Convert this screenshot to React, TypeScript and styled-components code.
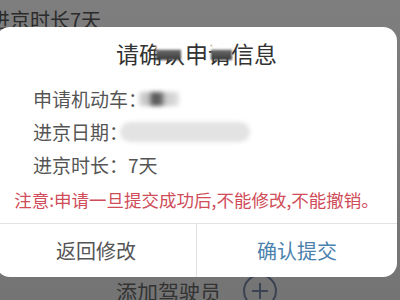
import React from "react";
import { createGlobalStyle, styled } from "styled-components";

const GlobalStyle = createGlobalStyle`
  html, body {
    margin: 0;
    padding: 0;
  }
  body {
    width: 400px;
    height: 300px;
    overflow: hidden;
    background: #7a7a7a;
    font-family: "Noto Sans CJK SC", "Noto Sans", sans-serif;
  }
`;

export default function App() {
  return (
    <>
      <GlobalStyle />
      <Screen>
        <BackdropPage>
          <BackLine>进京时长7天</BackLine>
          <BackFooter>
            <span>添加驾驶员</span>
            <PlusCircle viewBox="0 0 36 36">
              <circle cx="18" cy="18" r="16" fill="none" stroke="#3b4352" strokeWidth="2" />
              <path d="M10 18h16M18 10v16" stroke="#3b4352" strokeWidth="2" />
            </PlusCircle>
          </BackFooter>
        </BackdropPage>

        <Dialog>
          <TitleRow>
            <Title>
              请确认申请信息
              <Smudge $left={40} $width={25} />
              <Smudge $left={95} $width={21} />
            </Title>
          </TitleRow>

          <InfoList>
            <InfoRow>
              申请机动车：
              <Redacted $width={40} $height={14} $shift={-8} $plate />
            </InfoRow>
            <InfoRow>
              进京日期：
              <Redacted $width={130} $height={20} $shift={-8} />
            </InfoRow>
            <InfoRow>进京时长：7天</InfoRow>
          </InfoList>

          <Notice>注意:申请一旦提交成功后,不能修改,不能撤销。</Notice>

          <Actions>
            <ActionButton>返回修改</ActionButton>
            <ActionButton $primary>确认提交</ActionButton>
          </Actions>
        </Dialog>
      </Screen>
    </>
  );
}

const Screen = styled.div`
  position: relative;
  width: 400px;
  height: 300px;
  overflow: hidden;
  background: linear-gradient(to bottom, #7e7e7e, #747474);
`;

const BackdropPage = styled.div`
  height: 100%;
  display: flex;
  flex-direction: column;
  padding-top: 10px;
  box-sizing: border-box;
  color: #2b2b2b;
`;

const BackLine = styled.div`
  margin-left: -10px;
  font-size: 20px;
  line-height: 1;
`;

const BackFooter = styled.div`
  margin-top: auto;
  margin-bottom: -9px;
  padding-left: 116px;
  display: flex;
  align-items: center;
  gap: 21px;
  font-size: 21px;
  line-height: 1;
  color: #333;
`;

const PlusCircle = styled.svg`
  width: 36px;
  height: 36px;
`;

const Dialog = styled.div`
  position: absolute;
  top: 27px;
  left: -4px;
  width: 401px;
  height: 250px;
  background: #fff;
  border-radius: 14px;
  display: flex;
  flex-direction: column;
  overflow: hidden;
`;

const TitleRow = styled.div`
  padding-top: 11px;
  display: flex;
  justify-content: center;
`;

const Title = styled.div`
  position: relative;
  font-size: 23px;
  line-height: 30px;
  color: #333;
`;

const Smudge = styled.span<{ $left: number; $width: number }>`
  position: absolute;
  top: 4px;
  left: ${(p) => p.$left}px;
  width: ${(p) => p.$width}px;
  height: 18px;
  background: linear-gradient(
    to bottom,
    #fff 0,
    #fff 40%,
    #6a6a6a 45%,
    #3a3a3a 100%
  );
  filter: blur(0.8px);
`;

const InfoList = styled.div`
  margin-top: 14px;
  padding-left: 37px;
  display: flex;
  flex-direction: column;
`;

const InfoRow = styled.div`
  height: 33px;
  display: flex;
  align-items: center;
  font-size: 19px;
  color: #555;
`;

const Redacted = styled.span<{
  $width: number;
  $height: number;
  $shift: number;
  $plate?: boolean;
}>`
  display: inline-block;
  margin-left: ${(p) => p.$shift}px;
  width: ${(p) => p.$width}px;
  height: ${(p) => p.$height}px;
  border-radius: ${(p) => (p.$plate ? "2px" : "10px")};
  background: ${(p) =>
    p.$plate
      ? "linear-gradient(to right, #d8d8d8 0, #bdbdbd 25%, #555 35%, #666 55%, #c8c8c8 65%, #e2e2e2 100%)"
      : "#e3e3e3"};
  filter: blur(2px);
`;

const Notice = styled.div`
  margin-top: 7px;
  text-align: center;
  font-size: 17.5px;
  line-height: 24px;
  color: #cf4c58;
`;

const Actions = styled.div`
  margin-top: auto;
  height: 53px;
  display: flex;
  border-top: 1px solid #e2e2e2;
`;

const ActionButton = styled.div<{ $primary?: boolean }>`
  flex: 1;
  display: flex;
  align-items: center;
  justify-content: center;
  font-size: 20px;
  color: ${(p) => (p.$primary ? "#4a82ad" : "#555")};

  & + & {
    border-left: 1px solid #e2e2e2;
  }
`;
